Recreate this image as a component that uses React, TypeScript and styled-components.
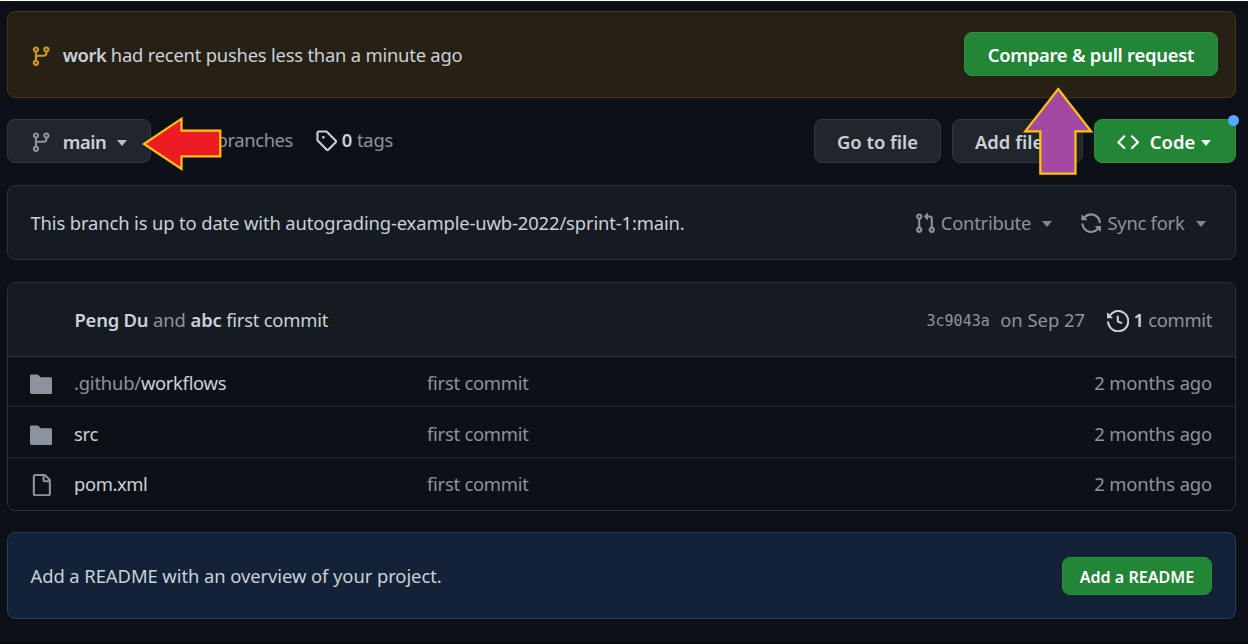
import React from "react";
import styled, { createGlobalStyle, css } from "styled-components";

const GlobalStyle = createGlobalStyle`
  * { box-sizing: border-box; }
  body {
    margin: 0;
    background: #0d1117;
    color: #c9d1d9;
    font-family: "Noto Sans", "Open Sans", sans-serif;
    font-size: 18.4px;
    line-height: 26px;
    overflow: hidden;
  }
`;

const colors = {
  text: "#c9d1d9",
  muted: "#8b949e",
  border: "#2d3239",
  panel: "#161b22",
};

const Page = styled.main`
  position: relative;
  height: 644px;
  padding: 10px 12px 0 7px;
  border-top: 1px solid #ffffff;
  border-bottom: 1px solid #020305;
  display: flex;
  flex-direction: column;
`;

const panel = css`
  display: flex;
  align-items: center;
  flex: none;
  border: 1px solid ${colors.border};
  border-radius: 8px;
`;

const PushBanner = styled.section`
  ${panel}
  height: 87px;
  padding: 0 17px 0 22px;
  background: #272115;
  border-color: #4c3510;
`;

const Toolbar = styled.nav`
  display: flex;
  align-items: center;
  flex: none;
  height: 44px;
  margin: 21px 0 22px;
`;

const SyncPanel = styled.section`
  ${panel}
  height: 75px;
  padding: 0 29px 0 22.5px;
  background: ${colors.panel};
`;

const FileTable = styled.section`
  flex: none;
  height: 229px;
  margin-top: 22px;
  border: 1px solid ${colors.border};
  border-radius: 8px;
  overflow: hidden;
`;

const CommitHeader = styled.header`
  display: flex;
  align-items: center;
  height: 74px;
  padding: 1px 23px 0 66.5px;
  background: ${colors.panel};
  border-bottom: 1px solid ${colors.border};
`;

const FileRow = styled.div<{ $height: number }>`
  display: grid;
  grid-template-columns: 44px 353px 1fr auto;
  align-items: center;
  height: ${(p) => p.$height}px;
  padding: 2px 23px 0 22px;
  border-bottom: 1px solid #21262d;
  &:nth-of-type(2) { padding-top: 3px; }
  &:last-child { border-bottom: 0; padding-top: 0; }
`;

const ReadmePanel = styled.section`
  ${panel}
  height: 87px;
  margin-top: 21px;
  padding: 0 23px 0 22.5px;
  background: #142238;
  border-color: #1c3f6e;
`;

const Text = styled.span<{ $muted?: boolean; $strong?: boolean; $track?: number }>`
  white-space: pre;
  color: ${(p) => (p.$muted ? colors.muted : "inherit")};
  font-weight: ${(p) => (p.$strong ? 600 : 400)};
  letter-spacing: ${(p) => p.$track ?? 0}px;
`;

const Hash = styled.code`
  font-family: "DejaVu Sans Mono", monospace;
  font-size: 15px;
  color: ${colors.muted};
  margin: 2px 10.5px 0 0;
`;

const Button = styled.button<{ $primary?: boolean; $width: number; $track?: number }>`
  display: flex;
  align-items: center;
  justify-content: center;
  flex: none;
  width: ${(p) => p.$width}px;
  height: 44px;
  padding: 1px 0 0;
  border: 1px solid ${(p) => (p.$primary ? "#2f8d44" : "#33383f")};
  border-radius: 8px;
  background: ${(p) => (p.$primary ? "#238636" : "#21262d")};
  color: ${(p) => (p.$primary ? "#ffffff" : colors.text)};
  font: 600 18.4px/26px "Noto Sans", "Open Sans", sans-serif;
  letter-spacing: ${(p) => p.$track ?? 0}px;
`;

const CompareButton = styled(Button)`
  margin-bottom: 1px;
  padding-top: 2px;
`;

const SmallButton = styled(Button)`
  height: 38px;
  padding-top: 2px;
  font-size: 16.1px;
`;

const BranchButton = styled(Button)`
  justify-content: flex-start;
  padding-left: 22px;
`;

const CodeButton = styled(Button)`
  position: relative;
  justify-content: flex-start;
  padding-left: 22px;
`;

const NoticeDot = styled.span`
  position: absolute;
  top: -5px;
  right: -4px;
  width: 11px;
  height: 11px;
  border-radius: 50%;
  background: #58a6ff;
`;

const ButtonGroup = styled.div`
  display: flex;
  gap: 11px;
  margin-left: auto;
`;

const TagLink = styled.a`
  display: flex;
  align-items: center;
  margin-left: 21.5px;
  padding-bottom: 3px;
`;

const BranchesLink = styled.a`
  display: flex;
  justify-content: flex-end;
  width: 142px;
  padding-bottom: 3px;
`;

const Menu = styled.div<{ $gap: number }>`
  display: flex;
  align-items: center;
  margin-left: ${(p) => p.$gap}px;
  color: ${colors.muted};
`;

const Spacer = styled.div`
  flex: 1;
`;

const IconSvg = styled.svg<{ $color?: string; $after?: number; $drop?: number }>`
  display: block;
  flex: none;
  width: 22.3px;
  height: 22.3px;
  fill: ${(p) => p.$color ?? "currentColor"};
  margin-right: ${(p) => p.$after ?? 0}px;
  margin-top: ${(p) => p.$drop ?? 0}px;
`;

const Caret = styled.span<{ $before: number }>`
  flex: none;
  margin: 2px 0 0 ${(p) => p.$before}px;
  border: 5.5px solid transparent;
  border-width: 6px 5.5px 0;
  border-top-color: currentColor;
  opacity: 0.9;
`;

const Annotation = styled.svg`
  position: absolute;
  inset: -1px 0 auto 0;
  width: 1248px;
  height: 644px;
  pointer-events: none;
`;

const paths = {
  branch:
    "M9.5 3.25a2.25 2.25 0 1 1 3 2.122V6A2.5 2.5 0 0 1 10 8.5H6a1 1 0 0 0-1 1v1.128a2.251 2.251 0 1 1-1.5 0V5.372a2.25 2.25 0 1 1 1.5 0v1.836A2.493 2.493 0 0 1 6 7h4a1 1 0 0 0 1-1v-.628A2.25 2.25 0 0 1 9.5 3.25Zm-6 0a.75.75 0 1 0 1.5 0 .75.75 0 0 0-1.5 0Zm8.25-.75a.75.75 0 1 0 0 1.5.75.75 0 0 0 0-1.5ZM4.25 12a.75.75 0 1 0 0 1.5.75.75 0 0 0 0-1.5Z",
  tag: "M1 7.775V2.75C1 1.784 1.784 1 2.75 1h5.025c.464 0 .91.184 1.238.513l6.25 6.25a1.75 1.75 0 0 1 0 2.474l-5.026 5.026a1.75 1.75 0 0 1-2.474 0l-6.25-6.25A1.752 1.752 0 0 1 1 7.775Zm1.5 0c0 .066.026.13.073.177l6.25 6.25a.25.25 0 0 0 .354 0l5.025-5.025a.25.25 0 0 0 0-.354l-6.25-6.25a.25.25 0 0 0-.177-.073H2.75a.25.25 0 0 0-.25.25ZM6 5a1 1 0 1 1 0 2 1 1 0 0 1 0-2Z",
  code: "m11.28 3.22 4.25 4.25a.75.75 0 0 1 0 1.06l-4.25 4.25a.749.749 0 0 1-1.275-.326.749.749 0 0 1 .215-.734L13.94 8l-3.72-3.72a.749.749 0 0 1 .326-1.275.749.749 0 0 1 .734.215Zm-6.56 0a.751.751 0 0 1 1.042.018.751.751 0 0 1 .018 1.042L2.06 8l3.72 3.72a.749.749 0 0 1-.326 1.275.749.749 0 0 1-.734-.215L.47 8.53a.75.75 0 0 1 0-1.06Z",
  pullRequest:
    "M1.5 3.25a2.25 2.25 0 1 1 3 2.122v5.256a2.251 2.251 0 1 1-1.5 0V5.372A2.25 2.25 0 0 1 1.5 3.25Zm5.677-.177L9.573.677A.25.25 0 0 1 10 .854V2.5h1A2.5 2.5 0 0 1 13.5 5v5.628a2.251 2.251 0 1 1-1.5 0V5a1 1 0 0 0-1-1h-1v1.646a.25.25 0 0 1-.427.177L7.177 3.427a.25.25 0 0 1 0-.354ZM3.75 2.5a.75.75 0 1 0 0 1.5.75.75 0 0 0 0-1.5Zm0 9.5a.75.75 0 1 0 0 1.5.75.75 0 0 0 0-1.5Zm8.25.75a.75.75 0 1 0 1.5 0 .75.75 0 0 0-1.5 0Z",
  sync: "M1.705 8.005a.75.75 0 0 1 .834.656 5.5 5.5 0 0 0 9.592 2.97l-1.204-1.204a.25.25 0 0 1 .177-.427h3.646a.25.25 0 0 1 .25.25v3.646a.25.25 0 0 1-.427.177l-1.38-1.38A7.002 7.002 0 0 1 1.05 8.84a.75.75 0 0 1 .656-.834ZM8 2.5a5.487 5.487 0 0 0-4.131 1.869l1.204 1.204A.25.25 0 0 1 4.896 6H1.25A.25.25 0 0 1 1 5.75V2.104a.25.25 0 0 1 .427-.177l1.38 1.38A7.002 7.002 0 0 1 14.95 7.16a.75.75 0 0 1-1.49.178A5.5 5.5 0 0 0 8 2.5Z",
  history:
    "m.427 1.927 1.215 1.215a8.002 8.002 0 1 1-1.6 5.685.75.75 0 1 1 1.493-.154 6.5 6.5 0 1 0 1.18-4.458l1.358 1.358A.25.25 0 0 1 3.896 6H.25A.25.25 0 0 1 0 5.75V2.104a.25.25 0 0 1 .427-.177ZM7.75 4a.75.75 0 0 1 .75.75v2.992l2.028.812a.75.75 0 0 1-.557 1.392l-2.5-1A.751.751 0 0 1 7 8.25v-3.5A.75.75 0 0 1 7.75 4Z",
  folder:
    "M1 1A1 1 0 0 0 0 2v11.75C0 14.44.56 15 1.25 15h13.5c.69 0 1.25-.56 1.25-1.25v-9.5C16 3.56 15.44 3 14.75 3H7.5a.25.25 0 0 1-.2-.1l-.9-1.2A1.75 1.75 0 0 0 5 1H1Z",
  file: "M2 1.75C2 .784 2.784 0 3.75 0h6.586c.464 0 .909.184 1.237.513l2.914 2.914c.329.328.513.773.513 1.237v9.586A1.75 1.75 0 0 1 13.25 16h-9.5A1.75 1.75 0 0 1 2 14.25Zm1.75-.25a.25.25 0 0 0-.25.25v12.5c0 .138.112.25.25.25h9.5a.25.25 0 0 0 .25-.25V6h-2.75A1.75 1.75 0 0 1 9 4.25V1.5Zm6.75.062V4.25c0 .138.112.25.25.25h2.688l-.011-.013-2.914-2.914-.013-.011Z",
};

type IconProps = { name: keyof typeof paths; color?: string; after?: number; drop?: number };

const Icon = ({ name, color, after, drop }: IconProps) => (
  <IconSvg viewBox="0 0 16 16" $color={color} $after={after} $drop={drop} aria-hidden>
    <path fillRule="evenodd" d={paths[name]} />
  </IconSvg>
);

type Entry = {
  icon: "folder" | "file";
  parent?: string;
  name: string;
  track: number;
  height: number;
  drop: number;
};

const entries: Entry[] = [
  { icon: "folder", parent: ".github/", name: "workflows", track: -0.32, height: 50, drop: 3 },
  { icon: "folder", name: "src", track: -0.25, height: 51, drop: 3 },
  { icon: "file", name: "pom.xml", track: -0.4, height: 52, drop: 2 },
];

export default function App() {
  return (
    <>
      <GlobalStyle />
      <Page>
        <PushBanner>
          <Icon name="branch" color="#d29922" after={10.5} drop={3} />
          <Text $strong $track={-0.5}>work</Text>
          <Text $track={-0.22}> had recent pushes less than a minute ago</Text>
          <Spacer />
          <CompareButton $primary $width={254} $track={-0.24}>Compare &amp; pull request</CompareButton>
        </PushBanner>

        <Toolbar>
          <BranchButton $width={144} $track={-0.5}>
            <Icon name="branch" color={colors.muted} after={10.5} drop={2} />
            main
            <Caret $before={11} />
          </BranchButton>
          <BranchesLink>
            <Text $muted $track={-0.4}>branches</Text>
          </BranchesLink>
          <TagLink>
            <Icon name="tag" after={5} drop={2} />
            <Text $strong>0</Text>
            <Text $muted $track={-0.2}> tags</Text>
          </TagLink>
          <ButtonGroup>
            <Button $width={127}>Go to file</Button>
            <BranchButton $width={131}>Add file</BranchButton>
            <CodeButton $primary $width={142}>
              <Icon name="code" after={10.5} drop={1} />
              Code
              <Caret $before={5.5} />
              <NoticeDot />
            </CodeButton>
          </ButtonGroup>
        </Toolbar>

        <SyncPanel>
          <Text $track={-0.13}>
            This branch is up to date with autograding-example-uwb-2022/sprint-1:main.
          </Text>
          <Spacer />
          <Menu $gap={0}>
            <Icon name="pullRequest" after={5} drop={2} />
            <Text $track={-0.25}>Contribute</Text>
            <Caret $before={11} />
          </Menu>
          <Menu $gap={28}>
            <Icon name="sync" after={5} drop={2} />
            <Text $track={-0.25}>Sync fork</Text>
            <Caret $before={11.5} />
          </Menu>
        </SyncPanel>

        <FileTable>
          <CommitHeader>
            <Text $strong $track={-0.2}>Peng Du</Text>
            <Text $muted $track={-0.1}> and </Text>
            <Text $strong $track={-0.1}>abc</Text>
            <Text $track={-0.23}> first commit</Text>
            <Spacer />
            <Hash>3c9043a</Hash>
            <Text $muted>on Sep 27</Text>
            <Menu $gap={22}>
              <Icon name="history" color={colors.text} after={4} drop={2} />
            </Menu>
            <Text $strong>1</Text>
            <Text $muted $track={-0.35}> commit</Text>
          </CommitHeader>
          {entries.map((entry) => (
            <FileRow key={entry.name} $height={entry.height}>
              <Icon name={entry.icon} color={colors.muted} drop={entry.drop} />
              <Text $track={entry.track}>
                {entry.parent && <Text $muted $track={-0.2}>{entry.parent}</Text>}
                {entry.name}
              </Text>
              <Text $muted $track={-0.25}>first commit</Text>
              <Text $muted $track={-0.13}>2 months ago</Text>
            </FileRow>
          ))}
        </FileTable>

        <ReadmePanel>
          <Text $track={-0.07}>Add a README with an overview of your project.</Text>
          <Spacer />
          <SmallButton $primary $width={150}>Add a README</SmallButton>
        </ReadmePanel>

        <Annotation viewBox="0 0 1248 644" stroke="#ffc20e" strokeWidth="2.2">
          <polygon
            fill="#ed1c24"
            points="144,144 181.5,118.7 181.5,130.7 220.3,130.7 220.3,156.3 181.5,156.3 181.5,169"
          />
          <polygon
            fill="#a349a4"
            points="1058.2,89 1091.2,131.3 1075.5,131.3 1075.5,173.7 1040.3,173.7 1040.3,131.3 1025.2,131.3"
          />
        </Annotation>
      </Page>
    </>
  );
}
